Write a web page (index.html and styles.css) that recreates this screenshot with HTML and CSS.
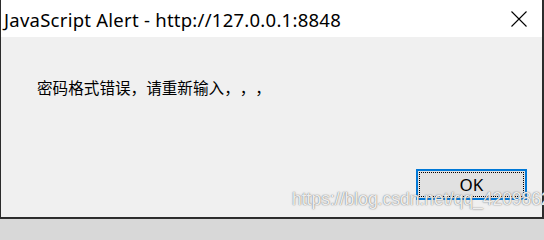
FILE: index.html
```html
<!DOCTYPE html>
<html lang="zh">
<head>
<meta charset="utf-8">
<title>JavaScript Alert</title>
<link rel="stylesheet" href="styles.css">
</head>
<body>
<div class="window">
  <div class="titlebar">
    <span class="title">JavaScript Alert - http://127.0.0.1:8848</span>
    <span class="close">
      <svg width="16" height="16" viewBox="0 0 16 16"><path d="M0.5 0.5 L15.5 15.5 M15.5 0.5 L0.5 15.5" stroke="#000" stroke-width="1.1" fill="none"/></svg>
    </span>
  </div>
  <div class="content">
    <p class="message">密码格式错误，请重新输入，，，</p>
    <div class="actions">
      <button class="ok">OK</button>
    </div>
  </div>
  <div class="watermark">https://blog.csdn.net/qq_42098623</div>
</div>
</body>
</html>
```
FILE: styles.css
```css
html, body {
  margin: 0;
  padding: 0;
}
html {
  background: #d8d8d8;
}
body {
  width: 544px;
  height: 219px;
  background: #2e2e2e;
  overflow: hidden;
}
.window {
  position: relative;
  width: 541px;
  height: 217px;
  border-left: 1px solid #2b2b2b;
  border-right: 1px solid #2b2b2b;
  border-bottom: 1px solid #2b2b2b;
  background: #f0f0f0;
  display: flex;
  flex-direction: column;
}
.titlebar {
  height: 37px;
  background: #ffffff;
  display: flex;
  align-items: center;
  justify-content: space-between;
  padding-left: 3px;
  padding-right: 15px;
  box-sizing: border-box;
}
.title {
  font-family: "Noto Sans", "Open Sans", sans-serif;
  font-size: 18.5px;
  letter-spacing: 0.25px;
  color: #000;
  margin-top: 1px;
}
.close {
  display: flex;
  width: 16px;
  height: 16px;
  margin-top: 1px;
}
.content {
  flex: 1;
  display: flex;
  flex-direction: column;
  justify-content: space-between;
  padding: 0 15px 17px 36px;
}
.message {
  margin: 40px 0 0 0;
  font-family: "Noto Sans CJK SC", sans-serif;
  font-size: 15.6px;
  line-height: 20px;
  color: #000;
  text-spacing-trim: space-all;
  font-feature-settings: "palt" 0, "halt" 0;
}
.actions {
  display: flex;
  justify-content: flex-end;
}
.ok {
  width: 111px;
  height: 31px;
  box-sizing: border-box;
  border: 2px solid #0078d7;
  background: #e1e1e1;
  outline: 1px dotted #000;
  outline-offset: -4px;
  font-family: "Noto Sans", "Open Sans", sans-serif;
  font-size: 17px;
  color: #000;
  padding: 0;
}
.watermark {
  position: absolute;
  left: 291px;
  top: 189px;
  font-family: "Liberation Sans", Arial, sans-serif;
  font-size: 17.5px;
  color: rgba(255, 255, 255, 0.9);
  text-shadow: 0 0 1px rgba(70, 70, 70, 0.8), 0 0 2px rgba(140, 140, 140, 0.5);
  white-space: nowrap;
}
```
